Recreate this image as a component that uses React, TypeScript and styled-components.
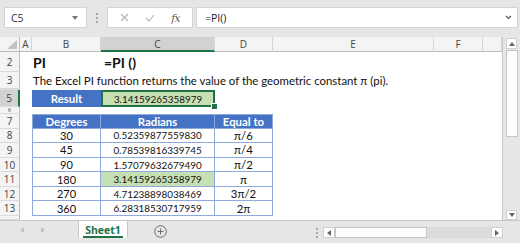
import React from "react";
import styled, { createGlobalStyle, css } from "styled-components";

const GlobalStyle = createGlobalStyle`
  html, body { margin: 0; padding: 0; background: #fff; overflow: hidden; }
  #root { width: 520px; height: 243px; }
  * { box-sizing: border-box; }
`;

const Window = styled.div`
  width: 520px;
  height: 243px;
  display: flex;
  flex-direction: column;
  overflow: hidden;
  font-family: "Open Sans", "Noto Sans", sans-serif;
  background: #fff;
`;

/* ---------- formula bar ---------- */
const FormulaBar = styled.div`
  height: 37px;
  flex: none;
  background: #e6e6e6;
  display: flex;
  align-items: flex-start;
  padding: 7px 2px 0 4px;
`;

const NameBox = styled.div`
  width: 83px;
  height: 21px;
  background: #fff;
  border: 1px solid #d4d4d4;
  display: flex;
  align-items: center;
  justify-content: space-between;
  padding: 0 8px 0 6px;
  font-size: 10.5px;
  color: #333;
`;

const Grip = styled.div`
  width: 20px;
  height: 21px;
  display: flex;
  flex-direction: column;
  align-items: center;
  justify-content: center;
  gap: 2px;
  & > span { width: 2px; height: 2px; background: #a8a8a8; }
`;

const ButtonGroup = styled.div`
  width: 86px;
  height: 21px;
  background: #fff;
  border: 1px solid #d4d4d4;
  display: flex;
  align-items: center;
  justify-content: space-around;
  padding: 0 4px;
  margin-right: 3px;
`;

const Fx = styled.span`
  font-family: "DejaVu Serif", "Liberation Serif", serif;
  font-style: italic;
  font-size: 10.5px;
  color: #555;
  letter-spacing: -0.5px;
`;

const FormulaInput = styled.div`
  flex: 1;
  height: 21px;
  background: #fff;
  border: 1px solid #d4d4d4;
  display: flex;
  align-items: center;
  justify-content: space-between;
  padding: 0 5px 0 8px;
  font-size: 10.5px;
  color: #222;
`;

/* ---------- sheet ---------- */
const SheetArea = styled.div`
  flex: none;
  height: 184px;
  display: flex;
  border-bottom: 1px solid #c8c8c8;
`;

const Grid = styled.div`
  width: 503px;
  display: grid;
  grid-template-columns: 20px 12px 69px 114px 58px 161px 49px 1fr;
  grid-template-rows: 15px 20px 17px 1px 17px 7px repeat(7, 14.58px) 1fr;
  border-right: 1px solid #c8c8c8;
  overflow: hidden;
`;

const Corner = styled.div`
  background: #f4f4f4;
  border-right: 1px solid #bdbdbd;
  border-bottom: 1px solid #bdbdbd;
  display: flex;
  align-items: flex-end;
  justify-content: flex-end;
  padding: 0 2px 2px 0;
`;

const ColHead = styled.div<{ $sel?: boolean }>`
  background: ${(p) => (p.$sel ? "#d2d2d2" : "#f4f4f4")};
  border-right: 1px solid #d4d4d4;
  border-bottom: ${(p) => (p.$sel ? "2px solid #217346" : "1px solid #bdbdbd")};
  display: flex;
  align-items: center;
  justify-content: center;
  font-size: 10px;
  color: #444;
  padding-top: ${(p) => (p.$sel ? "1px" : "0")};
`;

const RowHead = styled.div<{ $sel?: boolean; $small?: boolean }>`
  background: ${(p) => (p.$sel ? "#d2d2d2" : "#f4f4f4")};
  border-right: ${(p) => (p.$sel ? "2px solid #217346" : "1px solid #bdbdbd")};
  border-bottom: 1px solid #dadada;
  display: flex;
  align-items: center;
  justify-content: center;
  font-size: ${(p) => (p.$small ? 6 : 10)}px;
  color: #444;
  overflow: hidden;
  line-height: 1;
`;

type CellProps = {
  $fill?: string;
  $align?: "flex-start" | "center";
  $bold?: boolean;
  $color?: string;
  $span?: number;
  $box?: boolean;
  $top?: boolean;
  $left?: boolean;
  $size?: number;
  $num?: boolean;
};

const Cell = styled.div<CellProps>`
  display: flex;
  align-items: center;
  justify-content: ${(p) => p.$align ?? "flex-start"};
  padding: 0 1px;
  background: ${(p) => p.$fill ?? "#fff"};
  font-family: Lato, "Open Sans", sans-serif;
  font-size: ${(p) => p.$size ?? (p.$num ? 9.9 : 11.4)}px;
  font-weight: ${(p) => (p.$bold ? 700 : 400)};
  color: ${(p) => p.$color ?? "#111"};
  white-space: nowrap;
  min-width: 0;
  grid-column: span ${(p) => p.$span ?? 1};
  ${(p) =>
    p.$box &&
    css`
      border-right: 1px solid #8ea9db;
      border-bottom: 1px solid #8ea9db;
    `}
  ${(p) => p.$top && css`border-top: 1px solid #8ea9db;`}
  ${(p) => p.$left && css`border-left: 1px solid #8ea9db;`}
`;

const ActiveCell = styled(Cell)`
  position: relative;
  z-index: 1;
  box-shadow: inset 0 0 0 2px #217346;
  &::after {
    content: "";
    position: absolute;
    right: -3px;
    bottom: -3px;
    width: 5px;
    height: 5px;
    background: #217346;
    border: 1px solid #fff;
  }
`;

/* ---------- vertical scrollbar ---------- */
const VScroll = styled.div`
  flex: 1;
  background: #e6e6e6;
  display: flex;
  flex-direction: column;
  align-items: center;
  padding: 1px 0 0 0;
  gap: 1px;
`;

const ScrollBtn = styled.div<{ $h: number }>`
  width: 11px;
  height: ${(p) => p.$h}px;
  flex: none;
  background: #fff;
  border: 1px solid #cfcfcf;
  display: flex;
  align-items: center;
  justify-content: center;
`;

const VThumb = styled.div`
  width: 12px;
  height: 87px;
  flex: none;
  background: #fdfdfd;
  border: 1px solid #c4c4c4;
`;

const Spacer = styled.div`
  flex: 1;
`;

/* ---------- tab bar ---------- */
const TabBar = styled.div`
  flex: 1;
  background: #e6e6e6;
  display: flex;
  align-items: flex-start;
`;

const TabNav = styled.div`
  width: 78px;
  height: 17px;
  display: flex;
  align-items: center;
  padding-left: 20px;
  gap: 17px;
`;

const SheetTab = styled.div`
  width: 50px;
  height: 17px;
  background: #fff;
  border-left: 1px solid #c6c6c6;
  border-right: 1px solid #c6c6c6;
  display: flex;
  align-items: center;
  justify-content: center;
  font-family: "Open Sans", sans-serif;
  font-weight: 700;
  font-size: 10.5px;
  color: #217346;
  position: relative;
  &::after {
    content: "";
    position: absolute;
    left: 4px;
    right: 4px;
    bottom: 0;
    height: 2px;
    background: #217346;
  }
`;

const AddSheet = styled.div`
  margin: 4px 0 0 26px;
  width: 13px;
  height: 13px;
  display: flex;
`;

const HScroll = styled.div`
  margin: 6px 0 0 144px;
  display: flex;
  align-items: center;
  height: 11px;
`;

const HGrip = styled.div`
  width: 12px;
  height: 11px;
  display: flex;
  flex-direction: column;
  align-items: center;
  justify-content: center;
  gap: 2px;
  & > span { width: 2px; height: 2px; background: #a8a8a8; }
`;

const HBtn = styled.div`
  width: 12px;
  height: 11px;
  background: #fff;
  border: 1px solid #cfcfcf;
  display: flex;
  align-items: center;
  justify-content: center;
`;

const HThumb = styled.div`
  width: 92px;
  height: 11px;
  background: #fdfdfd;
  border: 1px solid #c4c4c4;
`;

const HTrack = styled.div`
  width: 64px;
  height: 11px;
  background: #dcdcdc;
`;

const Tri = ({ dir, color = "#666" }: { dir: "up" | "down" | "left" | "right"; color?: string }) => {
  const pts = {
    up: "0,4 3,0 6,4",
    down: "0,0 6,0 3,4",
    left: "4,0 4,6 0,3",
    right: "0,0 0,6 4,3",
  }[dir];
  const w = dir === "up" || dir === "down" ? 6 : 4;
  const h = dir === "up" || dir === "down" ? 4 : 6;
  return (
    <svg width={w} height={h} viewBox={`0 0 ${w} ${h}`}>
      <polygon points={pts} fill={color} />
    </svg>
  );
};

const rows = [
  { n: 8, deg: "30", rad: "0.52359877559830", eq: "π/6" },
  { n: 9, deg: "45", rad: "0.78539816339745", eq: "π/4" },
  { n: 10, deg: "90", rad: "1.57079632679490", eq: "π/2" },
  { n: 11, deg: "180", rad: "3.14159265358979", eq: "π", hl: true },
  { n: 12, deg: "270", rad: "4.71238898038469", eq: "3π/2" },
  { n: 13, deg: "360", rad: "6.28318530717959", eq: "2π" },
];

const Empty = ({ count }: { count: number }) => (
  <>
    {Array.from({ length: count }).map((_, i) => (
      <Cell key={i} />
    ))}
  </>
);

export default function App() {
  return (
    <Window>
      <GlobalStyle />
      <FormulaBar>
        <NameBox>
          <span>C5</span>
          <Tri dir="down" color="#777" />
        </NameBox>
        <Grip>
          <span />
          <span />
          <span />
        </Grip>
        <ButtonGroup>
          <svg width="9" height="9" viewBox="0 0 9 9">
            <path d="M1 1 L8 8 M8 1 L1 8" stroke="#b4b4b4" strokeWidth="1.1" />
          </svg>
          <svg width="10" height="8" viewBox="0 0 10 8">
            <path d="M1 4 L4 7 L9 1" stroke="#b4b4b4" strokeWidth="1.1" fill="none" />
          </svg>
          <Fx>fx</Fx>
        </ButtonGroup>
        <FormulaInput>
          <span>=PI()</span>
          <svg width="7" height="5" viewBox="0 0 7 5">
            <path d="M1 1 L3.5 3.5 L6 1" stroke="#555" strokeWidth="1.1" fill="none" />
          </svg>
        </FormulaInput>
      </FormulaBar>

      <SheetArea>
        <Grid>
          {/* header row */}
          <Corner>
            <svg width="10" height="9" viewBox="0 0 10 9">
              <polygon points="10,0 10,9 0,9" fill="#c3c3c3" />
            </svg>
          </Corner>
          <ColHead>A</ColHead>
          <ColHead>B</ColHead>
          <ColHead $sel>C</ColHead>
          <ColHead>D</ColHead>
          <ColHead>E</ColHead>
          <ColHead>F</ColHead>
          <ColHead />

          {/* row 2 */}
          <RowHead>2</RowHead>
          <Cell />
          <Cell $bold $size={14}>
            PI
          </Cell>
          <Cell $bold $size={14} style={{ paddingLeft: 3 }}>
            =PI ()
          </Cell>
          <Empty count={4} />

          {/* row 3 */}
          <RowHead>3</RowHead>
          <Cell />
          <Cell $span={6}>The Excel PI function returns the value of the geometric constant π (pi).</Cell>

          {/* row 4 (hidden) */}
          <RowHead />
          <Empty count={7} />

          {/* row 5 */}
          <RowHead $sel>5</RowHead>
          <Cell />
          <Cell $fill="#4472c4" $color="#fff" $bold $align="center">
            Result
          </Cell>
          <ActiveCell $fill="#c6e0b4" $align="center" $num>
            3.14159265358979
          </ActiveCell>
          <Empty count={4} />

          {/* row 6 */}
          <RowHead $small>6</RowHead>
          <Empty count={7} />

          {/* row 7 table header */}
          <RowHead>7</RowHead>
          <Cell />
          <Cell $fill="#4472c4" $color="#fff" $bold $align="center" $box $top $left>
            Degrees
          </Cell>
          <Cell $fill="#4472c4" $color="#fff" $bold $align="center" $box $top>
            Radians
          </Cell>
          <Cell $fill="#4472c4" $color="#fff" $bold $align="center" $box $top>
            Equal to
          </Cell>
          <Empty count={3} />

          {rows.map((r) => (
            <React.Fragment key={r.n}>
              <RowHead>{r.n}</RowHead>
              <Cell />
              <Cell $align="center" $box $left $size={11}>
                {r.deg}
              </Cell>
              <Cell $align="center" $box $num $fill={r.hl ? "#c6e0b4" : undefined}>
                {r.rad}
              </Cell>
              <Cell $align="center" $box>
                {r.eq}
              </Cell>
              <Empty count={3} />
            </React.Fragment>
          ))}

          {/* filler row */}
          <RowHead />
          <Empty count={7} />
        </Grid>

        <VScroll>
          <ScrollBtn $h={11}>
            <Tri dir="up" />
          </ScrollBtn>
          <VThumb />
          <Spacer />
          <ScrollBtn $h={10}>
            <Tri dir="down" />
          </ScrollBtn>
        </VScroll>
      </SheetArea>

      <TabBar>
        <TabNav>
          <Tri dir="left" color="#c2c2c2" />
          <Tri dir="right" color="#c2c2c2" />
        </TabNav>
        <SheetTab>Sheet1</SheetTab>
        <AddSheet>
          <svg width="13" height="13" viewBox="0 0 13 13">
            <circle cx="6.5" cy="6.5" r="5.8" fill="none" stroke="#6e6e6e" strokeWidth="1" />
            <path d="M6.5 3.5 V9.5 M3.5 6.5 H9.5" stroke="#6e6e6e" strokeWidth="1" />
          </svg>
        </AddSheet>
        <HScroll>
          <HGrip>
            <span />
            <span />
            <span />
          </HGrip>
          <HBtn>
            <Tri dir="left" />
          </HBtn>
          <HThumb />
          <HTrack />
          <HBtn>
            <Tri dir="right" />
          </HBtn>
        </HScroll>
      </TabBar>
    </Window>
  );
}
